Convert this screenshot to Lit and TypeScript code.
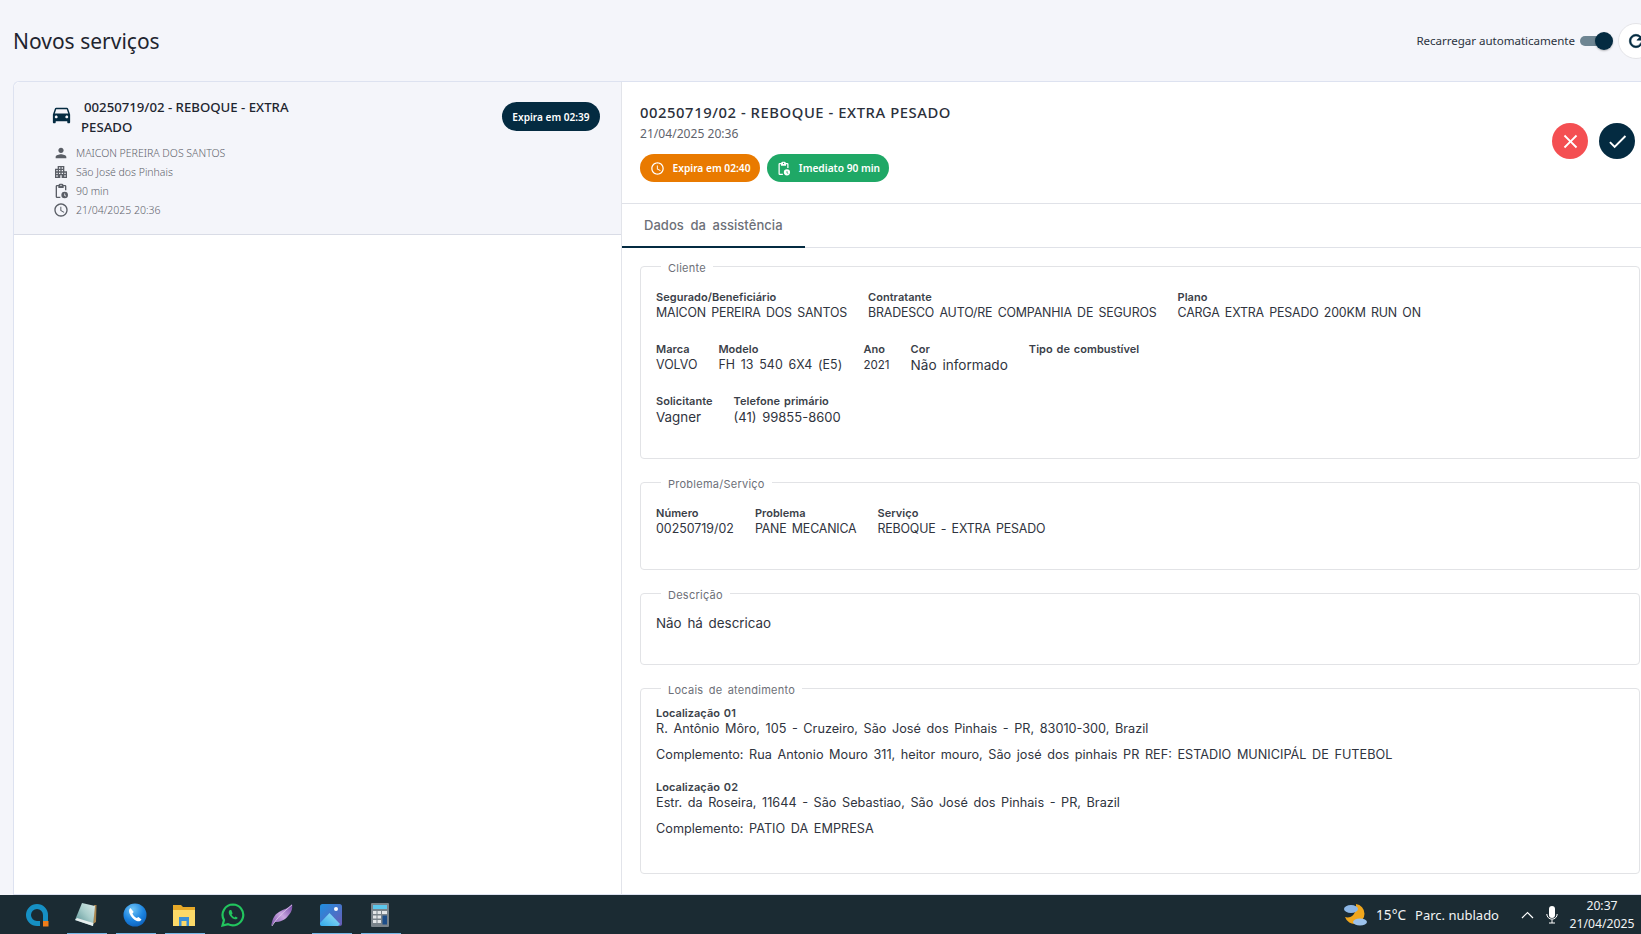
import { LitElement, html, css, svg } from "lit";
import { customElement } from "lit/decorators.js";

const P = {
  car: "M18.92 6.01C18.72 5.42 18.16 5 17.5 5h-11c-.66 0-1.21.42-1.42 1.01L3 12v8c0 .55.45 1 1 1h1c.55 0 1-.45 1-1v-1h12v1c0 .55.45 1 1 1h1c.55 0 1-.45 1-1v-8l-2.08-5.99zM6.5 16c-.83 0-1.5-.67-1.5-1.5S5.67 13 6.5 13s1.5.67 1.5 1.5S7.33 16 6.5 16zm11 0c-.83 0-1.5-.67-1.5-1.5s.67-1.5 1.5-1.5 1.5.67 1.5 1.5-.67 1.5-1.5 1.5zM5 11l1.5-4.5h11L19 11H5z",
  person: "M12 12c2.21 0 4-1.79 4-4s-1.79-4-4-4-4 1.79-4 4 1.79 4 4 4zm0 2c-2.67 0-8 1.34-8 4v2h16v-2c0-2.66-5.33-4-8-4z",
  apt: "M17 11V3H7v4H3v14h8v-4h2v4h8V11h-4zM7 19H5v-2h2v2zm0-4H5v-2h2v2zm0-4H5V9h2v2zm4 4H9v-2h2v2zm0-4H9V9h2v2zm0-4H9V5h2v2zm4 8h-2v-2h2v2zm0-4h-2V9h2v2zm0-4h-2V5h2v2zm4 12h-2v-2h2v2zm0-4h-2v-2h2v2z",
  clock: "M11.99 2C6.47 2 2 6.48 2 12s4.47 10 9.99 10C17.52 22 22 17.52 22 12S17.52 2 11.99 2zM12 20c-4.42 0-8-3.58-8-8s3.58-8 8-8 8 3.58 8 8-3.58 8-8 8zm.5-13H11v6l5.25 3.15.75-1.23-4.5-2.67z",
  clipOutline: "M11 22.500H6a2 2 0 0 1-2-2V5a2 2 0 0 1 2-2h2.200a3 3 0 0 1 1-1.400C9.700 1.200 10.300 1 12 1s2.300.2 2.800.6a3 3 0 0 1 1 1.400H18a2 2 0 0 1 2 2v6h-2V5h-2v2.500H8V5H6v15.500h5v2zM12 2.800a1 1 0 1 0 0 2 1 1 0 0 0 0-2z",
  clipClock: "M17.500 13a5 5 0 1 0 0 10 5 5 0 0 0 0-10zm1.700 7.400L17 19v-3.200h1.200v2.500l1.600 1.100-.6 1z",
  close: "M19 6.410 17.590 5 12 10.590 6.410 5 5 6.410 10.590 12 5 17.590 6.410 19 12 13.410 17.590 19 19 17.590 13.410 12z",
  check: "M9 16.170 4.830 12l-1.420 1.410L9 19 21 7l-1.410-1.410z",
  refresh: "M17.650 6.350A7.960 7.960 0 0 0 12 4c-4.420 0-7.990 3.580-7.990 8s3.570 8 7.990 8c3.730 0 6.840-2.550 7.730-6h-2.080A5.990 5.990 0 0 1 12 18c-3.310 0-6-2.690-6-6s2.690-6 6-6c1.660 0 3.140.69 4.220 1.780L13 11h7V4l-2.350 2.350z",
};

const icon = (d: string | string[], cls = "") => html`<svg class="ic ${cls}" viewBox="0 0 24 24" aria-hidden="true">${(Array.isArray(d) ? d : [d]).map((p) => svg`<path d=${p}></path>`)}</svg>`;

const rows1 = [
  [["Segurado/Beneficiário", "MAICON PEREIRA DOS SANTOS", "u"], ["Contratante", "BRADESCO AUTO/RE COMPANHIA DE SEGUROS", "u"], ["Plano", "CARGA EXTRA PESADO 200KM RUN ON", "u"]],
  [["Marca", "VOLVO", ""], ["Modelo", "FH 13 540 6X4 (E5)", "p"], ["Ano", "2021", "n"], ["Cor", "Não informado", "w2"], ["Tipo de combustível", "", ""]],
  [["Solicitante", "Vagner", "w"], ["Telefone primário", "(41) 99855-8600", "w3"]],
];
const rows2 = [[["Número", "00250719/02", ""], ["Problema", "PANE MECANICA", "u"], ["Serviço", "REBOQUE - EXTRA PESADO", "u"]]];

@customElement("app-root")
export class AppRoot extends LitElement {
  static styles = css`
    :host { display: flex; flex-direction: column; width: 1641px; height: 934px; overflow: hidden; background: #f4f5fa; font-family: "Noto Sans", sans-serif; color: #2f3440; }
    * { box-sizing: border-box; }
    .ic { display: block; fill: currentColor; flex: none; }
    .top { height: 81px; flex: none; display: flex; align-items: center; padding: 0 0 0 13px; }
    h1 { margin: 0; font-size: 21px; font-weight: 400; color: #1f2530; flex: 1; padding-top: 1px; }
    .auto { font-size: 11.6px; letter-spacing: -.05px; color: #2b3340; margin-right: 5px; }
    .toggle { position: relative; width: 32px; height: 10px; border-radius: 5px; background: #6e8592; margin-right: 6px; }
    .toggle i { position: absolute; right: -1px; top: -4px; width: 18px; height: 18px; border-radius: 50%; background: #042b41; box-shadow: 0 1px 2px #0004; }
    .rbtn { width: 36px; height: 36px; border-radius: 50%; background: #fff; border: 1px solid #e4e4e8; margin-right: -13px; display: flex; align-items: center; justify-content: center; color: #042b41; flex: none; }
    .rbtn .ic { width: 20px; height: 20px; stroke: currentColor; stroke-width: .7; }
    .main { flex: 1; min-height: 0; margin-left: 13px; display: flex; background: #fff; border: 1px solid #dde2f0; border-right: 0; border-radius: 6px 0 0 0; }
    .left { width: 608px; flex: none; border-right: 1px solid #e2e4ea; }
    .item { height: 153px; background: #f4f5fa; border-bottom: 1px solid #d9dce6; padding: 15px 20px 0 38px; position: relative; border-radius: 6px 0 0 0; }
    .item-title { width: 250px; font-size: 13.2px; font-weight: 500; line-height: 20px; color: #1e2530; margin: 0 0 6px 29px; text-indent: 3px; position: relative; }
    .item-title .ic { position: absolute; left: -31px; top: 6px; width: 23px; height: 23px; color: #042b41; }
    .meta { display: flex; align-items: center; height: 19px; font-size: 10.5px; font-weight: 300; color: #5f636c; gap: 7px; }
    .meta .ic { width: 16px; height: 16px; color: #5a5e66; margin-left: 1px; }
    .expire { position: absolute; right: 21px; top: 20px; height: 29px; width: 98px; border-radius: 15px; background: #042b41; color: #fff; font-size: 10.1px; font-weight: 600; display: flex; align-items: center; justify-content: center; }
    .right { flex: 1; min-width: 0; display: flex; flex-direction: column; }
    .head { height: 122px; flex: none; padding: 19px 0 0 18px; border-bottom: 1px solid #e0e2e8; position: relative; }
    h2 { margin: 0; font-size: 14.8px; font-weight: 500; line-height: 22px; letter-spacing: .56px; color: #2b303b; }
    .date { font-size: 12.1px; line-height: 18px; margin-top: 2px; color: #5f636c; }
    .chips { display: flex; gap: 7px; margin-top: 11px; }
    .chip { height: 28px; border-radius: 14px; color: #fff; display: flex; align-items: center; justify-content: center; gap: 8px; font-size: 10.2px; font-weight: 600; }
    .chip .ic { width: 15px; height: 15px; }
    .or { width: 120px; background: #e97a00; }
    .gr { width: 122px; background: #1fa866; }
    .actions { position: absolute; right: 6px; top: 41px; display: flex; gap: 11px; }
    .act { width: 36px; height: 36px; border-radius: 50%; display: flex; align-items: center; justify-content: center; color: #fff; }
    .act .ic { width: 23px; height: 23px; }
    .red { background: #f44f52; }
    .navy { background: #042b41; }
    .tabs { height: 44px; flex: none; border-bottom: 1px solid #e0e2e8; display: flex; }
    .tab { width: 183px; height: 44px; border-bottom: 2.5px solid #042b41; padding: 0 0 0 22px; display: flex; align-items: center; font-family: Inter, sans-serif; font-size: 13px; font-weight: 500; color: #6d7078; word-spacing: 3px; letter-spacing: .05px; }
    .body { flex: 1; min-height: 0; padding: 9px 1px 0 18px; display: flex; flex-direction: column; gap: 14px; font-family: Inter, sans-serif; }
    fieldset { margin: 0; padding: 0 15px; border: 1px solid #e2e3e6; border-radius: 4px; min-width: 0; flex: none; }
    legend { margin-left: 5px; padding: 4px 7px 0; font-size: 11px; line-height: 14px; color: #6d7078; word-spacing: 2px; letter-spacing: .25px; }
    .f1 { height: 202px; }
    .f2 { height: 97px; }
    .f3 { height: 81px; }
    .f4 { height: 195px; }
    .row { display: flex; gap: 21px; height: 52px; }
    .rows { padding-top: 14px; }
    .lab { font-size: 11px; line-height: 16px; font-weight: 600; color: #3b3f49; white-space: nowrap; word-spacing: 1px; letter-spacing: .04px; }
    .val { font-size: 12.4px; line-height: 16px; color: #30343e; word-spacing: 2px; white-space: nowrap; }
    .val.u { letter-spacing: -.17px; }
    .val.p { letter-spacing: .1px; }
    .val.w { font-size: 13.4px; }
    .val.w2 { font-size: 13.6px; }
    .val.w3 { font-size: 13px; }
    .val.n { font-size: 11.6px; }
    .desc { padding-top: 13px; }
    .loc { padding-top: 8px; }
    .loc .val { font-size: 12.7px; margin-bottom: 10px; }
    .loc .gap { height: 6px; }
    .bar { height: 39px; flex: none; background: #1b2b33; color: #fff; display: flex; align-items: stretch; position: relative; }
    .apps { display: flex; padding-left: 25px; flex: 1; }
    .app { width: 49px; display: flex; align-items: flex-start; padding-top: 8px; position: relative; }
    .app svg { width: 24px; height: 24px; display: block; }
    .app.on::after { content: ""; position: absolute; left: -7px; width: 40px; bottom: 0; height: 1.5px; background: #74b7e6; }
    .tray { display: flex; align-items: center; font-size: 13px; color: #f2f4f5; }
    .tray svg { display: block; flex: none; }
    .temp { margin-left: 9px; font-size: 13.6px; }
    .cond { margin-left: 9px; }
    .chev { margin-left: 22px; }
    .mic { margin-left: 12px; }
    .clock { width: 78px; text-align: center; font-size: 12.2px; line-height: 18px; margin-left: 5px; }
  `;

  private fields(rows: string[][][]) {
    return rows.map((r) => html`<div class="row">${r.map(([l, v, c]) => html`<div><div class="lab">${l}</div><div class="val ${c}">${v}</div></div>`)}</div>`);
  }

  private taskbar() {
    return html`<div class="bar">
      <div class="apps">
        <div class="app"><svg viewBox="0 0 24 24"><path d="M15 20.500h-3A8.500 8.500 0 1 1 20.500 12v6" fill="none" stroke="#1690c4" stroke-width="5"></path><rect x="18" y="18" width="5.500" height="5.500" fill="#f07d1a"></rect></svg></div>
        <div class="app on"><svg viewBox="0 0 24 24"><defs><linearGradient id="np" x1="0" y1="1" x2="1" y2="0"><stop offset="0" stop-color="#4f8a8e"></stop><stop offset=".55" stop-color="#a8cdcb"></stop><stop offset="1" stop-color="#dcebea"></stop></linearGradient></defs><path d="M20 2h2.500L22 19l-3 2z" fill="#a98650"></path><path d="M8 0 21 3 19 23 1 17z" fill="url(#np)"></path><path d="M1 17l18 6 .3-3L3 15z" fill="#e8eeee"></path></svg></div>
        <div class="app on"><svg viewBox="0 0 24 24"><defs><radialGradient id="ph" cx=".4" cy=".25" r=".85"><stop offset="0" stop-color="#6fc4f5"></stop><stop offset=".55" stop-color="#1c84e0"></stop><stop offset="1" stop-color="#0b5bb5"></stop></radialGradient></defs><circle cx="12" cy="12" r="11.500" fill="url(#ph)"></circle><path d="M7.500 5c-1.700 1.200-1.800 3.500-.8 5.700 1.400 3.200 3.800 5.800 7 7.200 2.200.9 4 .3 4.800-1.400l-3-2.500-1.800 1.100c-1.900-1-3.400-2.700-4.300-4.700l1.300-1.500z" fill="#fff"></path></svg></div>
        <div class="app on"><svg viewBox="0 0 24 24"><path d="M1 2h8l2 2h12v19H1z" fill="#e7a928"></path><path d="M1 7h22v16H1z" fill="#fbd968"></path><path d="M7 14h10v9h-2.500v-5h-5v5H7z" fill="#3a8fd6"></path></svg></div>
        <div class="app"><svg viewBox="0 0 24 24"><path d="M12 1.500a10.400 10.400 0 0 0-9 15.600L1.500 22.500l5.500-1.400A10.400 10.400 0 1 0 12 1.500z" fill="none" stroke="#22c55e" stroke-width="2.200"></path><path d="M8.800 7c-1.300 1-1.400 2.800-.4 4.700 1 1.800 2.700 3.600 4.800 4.400 1.500.6 3 .1 3.500-1.300l-2.100-1.300-1 1c-1.200-.5-2.500-1.800-3-3l1-1L10.300 7z" fill="#22c55e"></path></svg></div>
        <div class="app"><svg viewBox="0 0 24 24"><defs><linearGradient id="fe" x1="0" y1="1" x2="1" y2="0"><stop offset="0" stop-color="#7a4ea8"></stop><stop offset=".5" stop-color="#c9a6e0"></stop><stop offset="1" stop-color="#6c3f9e"></stop></linearGradient></defs><path d="M1 23C3 15 4 12 9 9c5-3 10-4 13-8 1 5-1 9-4 12-3 4-8 6-13 6z" fill="url(#fe)"></path><path d="M2 23C7 15 13 9 22 2" stroke="#e5d3ef" stroke-width=".8" fill="none"></path></svg></div>
        <div class="app on"><svg viewBox="0 0 24 24"><defs><linearGradient id="pg" x1="0" y1="0" x2="1" y2="1"><stop offset="0" stop-color="#1f8fe0"></stop><stop offset="1" stop-color="#6a5bb5"></stop></linearGradient><linearGradient id="pm" x1="0" y1="1" x2="1" y2="0"><stop offset="0" stop-color="#30a8ea"></stop><stop offset="1" stop-color="#9fe3f7"></stop></linearGradient></defs><rect x="1" y="1" width="22" height="22" rx="2.500" fill="url(#pg)"></rect><circle cx="17" cy="6" r="2" fill="#fff"></circle><path d="M1 20 10.500 10 21 21l-2 2H3a2 2 0 0 1-2-2z" fill="url(#pm)"></path></svg></div>
        <div class="app on"><svg viewBox="0 0 24 24"><rect x="3" y="0" width="18" height="24" rx="1" fill="#79838a"></rect><rect x="5" y="2" width="14" height="4" fill="#5cc7ec"></rect><path d="M5 8h3.500v3H5zm4.500 0H13v3H9.500zm4.500 0h5v3h-5zM5 12.500h3.500v3H5zm4.500 0H13v3H9.500zM5 17h3.500v3H5zm4.500 0H13v3H9.500z" fill="#e3e6e8"></path><rect x="14.500" y="12.500" width="4.500" height="9" fill="#1d4e89"></rect></svg></div>
      </div>
      <div class="tray">
        <svg width="24" height="24" viewBox="0 0 24 24"><path d="M13 1a10 10 0 1 1-11 13c5 2 12-2 11-13z" fill="#f0a61c"></path><ellipse cx="8" cy="6" rx="7" ry="4" fill="#8cb6e6"></ellipse><ellipse cx="17" cy="19" rx="7" ry="3.500" fill="#9cc2ec"></ellipse></svg>
        <span class="temp">15°C</span>
        <span class="cond">Parc. nublado</span>
        <svg class="chev" width="13" height="8" viewBox="0 0 13 8"><path d="M1 7 6.500 1.500 12 7" fill="none" stroke="#fff" stroke-width="1.200"></path></svg>
        <svg class="mic" width="12" height="18" viewBox="0 0 12 18"><rect x="3" y="0" width="6" height="12" rx="3" fill="#fff"></rect><path d="M.8 8a5.200 5.200 0 0 0 10.400 0M6 13.500V17M3 17h6" fill="none" stroke="#fff" stroke-width="1"></path></svg>
        <div class="clock">20:37<br />21/04/2025</div>
      </div>
    </div>`;
  }

  render() {
    return html`
      <div class="top">
        <h1>Novos serviços</h1>
        <span class="auto">Recarregar automaticamente</span>
        <div class="toggle"><i></i></div>
        <div class="rbtn">${icon(P.refresh)}</div>
      </div>
      <div class="main">
        <div class="left">
          <div class="item">
            <div class="item-title">${icon(P.car)}00250719/02 - REBOQUE - EXTRA PESADO</div>
            <div class="meta">${icon(P.person)}MAICON PEREIRA DOS SANTOS</div>
            <div class="meta">${icon(P.apt)}São José dos Pinhais</div>
            <div class="meta">${icon([P.clipOutline, P.clipClock])}90 min</div>
            <div class="meta">${icon(P.clock)}21/04/2025 20:36</div>
            <div class="expire">Expira em 02:39</div>
          </div>
        </div>
        <div class="right">
          <div class="head">
            <h2>00250719/02 - REBOQUE - EXTRA PESADO</h2>
            <div class="date">21/04/2025 20:36</div>
            <div class="chips">
              <div class="chip or">${icon(P.clock)}Expira em 02:40</div>
              <div class="chip gr">${icon([P.clipOutline, P.clipClock])}Imediato 90 min</div>
            </div>
            <div class="actions">
              <div class="act red">${icon(P.close)}</div>
              <div class="act navy">${icon(P.check)}</div>
            </div>
          </div>
          <div class="tabs"><div class="tab">Dados da assistência</div></div>
          <div class="body">
            <fieldset class="f1"><legend>Cliente</legend><div class="rows">${this.fields(rows1)}</div></fieldset>
            <fieldset class="f2"><legend>Problema/Serviço</legend><div class="rows">${this.fields(rows2)}</div></fieldset>
            <fieldset class="f3"><legend>Descrição</legend><div class="desc val w">Não há descricao</div></fieldset>
            <fieldset class="f4"><legend>Locais de atendimento</legend>
              <div class="loc">
                <div class="lab">Localização 01</div>
                <div class="val">R. Antônio Môro, 105 - Cruzeiro, São José dos Pinhais - PR, 83010-300, Brazil</div>
                <div class="val">Complemento: Rua Antonio Mouro 311, heitor mouro, São josé dos pinhais PR REF: ESTADIO MUNICIPÁL DE FUTEBOL</div>
                <div class="gap"></div>
                <div class="lab">Localização 02</div>
                <div class="val">Estr. da Roseira, 11644 - São Sebastiao, São José dos Pinhais - PR, Brazil</div>
                <div class="val">Complemento: PATIO DA EMPRESA</div>
              </div>
            </fieldset>
          </div>
        </div>
      </div>
      ${this.taskbar()}
    `;
  }
}
